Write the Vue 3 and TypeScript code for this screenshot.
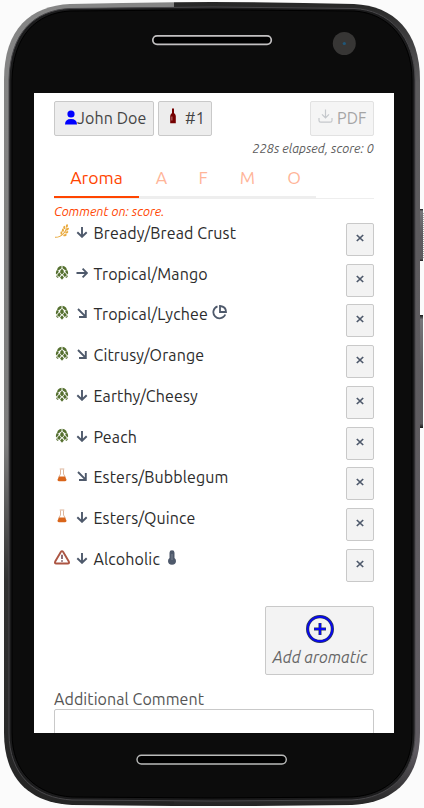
<script setup lang="ts">
type Kind = 'grain' | 'hop' | 'flask' | 'warning'
type Dir = 'down' | 'right' | 'diagonal'
interface Aromatic {
  kind: Kind
  dir: Dir
  name: string
  extra?: 'pie' | 'thermo'
}

const rows: Aromatic[] = [
  { kind: 'grain', dir: 'down', name: 'Bready/Bread Crust' },
  { kind: 'hop', dir: 'right', name: 'Tropical/Mango' },
  { kind: 'hop', dir: 'diagonal', name: 'Tropical/Lychee', extra: 'pie' },
  { kind: 'hop', dir: 'diagonal', name: 'Citrusy/Orange' },
  { kind: 'hop', dir: 'down', name: 'Earthy/Cheesy' },
  { kind: 'hop', dir: 'down', name: 'Peach' },
  { kind: 'flask', dir: 'diagonal', name: 'Esters/Bubblegum' },
  { kind: 'flask', dir: 'down', name: 'Esters/Quince' },
  { kind: 'warning', dir: 'down', name: 'Alcoholic', extra: 'thermo' },
]

const arrows: Record<Dir, string> = {
  down: 'M6 1v9.5M1.3 6.2L6 10.8l4.7-4.6',
  right: 'M0.5 6h10.3M6.6 1.6L11 6l-4.4 4.4',
  diagonal: 'M2 2l7.6 7.6M9.8 3v7H3',
}
const tabs = ['A', 'F', 'M', 'O']
</script>

<template>
  <div class="phone">
    <svg class="shell" width="424" height="808" viewBox="0 0 424 808">
      <defs>
        <linearGradient id="rimL" x1="0" y1="0" x2="0" y2="1">
          <stop offset="0" stop-color="#858585" />
          <stop offset=".55" stop-color="#7d7d7d" />
          <stop offset=".72" stop-color="#303030" />
          <stop offset="1" stop-color="#242424" />
        </linearGradient>
        <linearGradient id="rimR" x1="0" y1="0" x2="0" y2="1">
          <stop offset="0" stop-color="#262626" />
          <stop offset=".1" stop-color="#5c5b5d" />
          <stop offset=".93" stop-color="#605c62" />
          <stop offset="1" stop-color="#242424" />
        </linearGradient>
        <linearGradient id="key" x1="0" y1="0" x2="0" y2="1">
          <stop offset="0" stop-color="#171717" />
          <stop offset=".04" stop-color="#77767a" />
          <stop offset=".5" stop-color="#5c5a5e" />
          <stop offset=".96" stop-color="#5c5a5e" />
          <stop offset="1" stop-color="#171717" />
        </linearGradient>
        <clipPath id="lh"><rect width="174" height="808" /></clipPath>
        <clipPath id="rh"><rect x="174" width="250" height="808" /></clipPath>
        <path id="outer" d="M4 80C4 28 31 6 70 4Q212 0 354 4C394 6 420 31 420 80V733C420 779 394 803 352 805Q212 807 72 805C30 803 4 779 4 733Z" />
      </defs>
      <rect x="418" y="209" width="5" height="52" fill="url(#key)" />
      <path d="M423.500 213v46" stroke="#a9a9a9" stroke-dasharray="1 1" />
      <rect x="418" y="315" width="5" height="113" fill="url(#key)" />
      <use href="#outer" fill="url(#rimL)" clip-path="url(#lh)" />
      <use href="#outer" fill="url(#rimR)" clip-path="url(#rh)" />
      <path d="M9 80C10 33 34 10 70 8.500Q212 5.500 354 8.500C389 10 415 36 415 80V733C415 775 389 798 352 800Q212 802 72 800C35 798 9 775 9 733Z" fill="#1b1b1c" stroke="#48474a" />
      <path d="M12 80C13 36 36 13 70 11Q212 8.500 354 11C387 13 412 38 412 80V733C412 773 387 795 352 797Q212 799 72 797C37 795 12 773 12 733Z" fill="#0c0c0c" stroke="#000" />
      <rect x="152.800" y="35.800" width="118.500" height="8.500" rx="4.250" fill="#000" stroke="#c2c0c1" stroke-width="1.700" />
      <circle cx="344.300" cy="43.500" r="11.500" fill="#373635" />
      <circle cx="344.300" cy="43.500" r="1.600" fill="#205779" />
      <rect x="137" y="755.200" width="149.300" height="8.800" rx="4.400" fill="#000" stroke="#b9bab9" stroke-width="1.400" />
    </svg>

    <main class="screen">
      <header class="toolbar">
        <button class="btn user">
          <svg width="12" height="15" viewBox="0 0 12 15"><circle cx="6" cy="4" r="3.600" fill="#00f" /><path d="M0 14.500Q0 9 6 9t6 5.500Z" fill="#00f" /></svg>
          <span>John Doe</span>
        </button>
        <button class="btn beer">
          <svg width="6" height="16" viewBox="0 0 6 16"><path d="M2 .5h2V5q1.800 1.500 1.800 3v7.200H.2V8Q.2 6.500 2 5Z" fill="#750000" /><path d="M1 8.500h1.600v4H1z" fill="#a45050" /></svg>
          <span>#1</span>
        </button>
        <button class="btn pdf" disabled>
          <svg width="15" height="15" viewBox="0 0 15 15" fill="none" stroke="#c5c8cc" stroke-width="1.200"><path d="M7.500 .5v8M4 5.300l3.500 3.500L11 5.300M1 9v2.500q0 1.700 1.700 1.700h9.600q1.700 0 1.700-1.700V9" /></svg>
          <span>PDF</span>
        </button>
      </header>
      <p class="status"><span>228s elapsed, score: 0</span></p>
      <nav class="tabs">
        <div class="tab active">Aroma</div>
        <div class="rest"><div v-for="t in tabs" :key="t" class="tab" :class="'t' + t">{{ t }}</div></div>
      </nav>
      <p class="hint"><span>Comment on: score.</span></p>

      <ul class="list">
        <li v-for="r in rows" :key="r.name">
          <svg class="kind" width="16" height="16" viewBox="0 0 16 16">
            <g v-if="r.kind === 'grain'" fill="#e9a93c">
              <path d="M1 13.300Q6 13.500 9.500 9.500T12 4" fill="none" stroke="#e9a93c" stroke-width="1.100" />
              <ellipse cx="7.400" cy="9" rx="1" ry="1.700" />
              <ellipse cx="8.900" cy="6.300" rx="1" ry="1.700" />
              <ellipse cx="10.300" cy="3.500" rx="1" ry="1.700" />
              <ellipse cx="12.900" cy="2" rx="1" ry="1.700" transform="rotate(15 12.900 2)" />
              <ellipse cx="13.500" cy="5.200" rx="1" ry="1.700" transform="rotate(50 13.500 5.200)" />
              <ellipse cx="12.800" cy="8.300" rx="1" ry="1.700" transform="rotate(60 12.800 8.300)" />
              <ellipse cx="11" cy="11.200" rx="1" ry="1.800" transform="rotate(75 11 11.200)" />
            </g>
            <g v-else-if="r.kind === 'hop'" fill="#55702f">
              <path d="M7.500 .8V3.200L3.300 6.200Q2.300 2 7.500 .8ZM8.500 .8V3.200l4.200 3Q13.700 2 8.500 .8Z" />
              <path d="M8 3.800Q10.300 5.500 9.900 7.500L8 9.600 6.100 7.500Q5.700 5.500 8 3.800Z" />
              <path d="M2.400 5.200L1.800 8.300 2.600 9.600 5 6.400ZM13.600 5.200l.6 3.100-.8 1.300L11 6.400Z" />
              <path d="M5.300 7.200L7 9.800 5.300 12 3 10.300ZM10.700 7.200L9 9.800l1.700 2.200L13 10.300Z" />
              <path d="M2 10.200l2.500 2-.6.900Q2 12.300 2 10.200ZM14 10.200l-2.500 2 .6.900Q14 12.300 14 10.200Z" />
              <path d="M8 10.300l1.900 2.200L8 14.700l-1.900-2.200Z" />
            </g>
            <g v-else-if="r.kind === 'flask'">
              <path d="M5.700 1h4.600M6.500 1.500V6L4.500 9.500M9.500 1.500V6l2 3.500" fill="none" stroke="#d9ad90" stroke-width=".9" />
              <path d="M5 8.500h6l1.400 3q.4 1.800-1.300 1.800H4.900q-1.700 0-1.300-1.800Z" fill="#d9651a" />
            </g>
            <g v-else fill="none" stroke="#ac5543" stroke-width="1.900">
              <path d="M6.800 2Q8 .2 9.200 2l5.600 9.500q.8 2-1 2H2.200q-1.800 0-1-2Z" stroke-linejoin="round" />
              <path d="M8 4.800v4.200M8 10.200v1.600" stroke="#7a5560" stroke-width="1.700" />
            </g>
          </svg>
          <svg class="dir" width="12" height="12" viewBox="0 0 12 12"><path :d="arrows[r.dir]" fill="none" stroke="#4e596b" stroke-width="1.900" /></svg>
          <span class="name">{{ r.name }}</span>
          <svg v-if="r.extra === 'pie'" class="pie" width="15" height="15" viewBox="0 0 15 15" fill="none" stroke="#4e596b" stroke-width="1.800"><path d="M5.500 1.300a6.200 6.200 0 1 0 7.800 8.200" /><path d="M8 1v6h6Q14 1.500 8 1Z" /></svg>
          <svg v-if="r.extra === 'thermo'" class="thermo" width="8" height="15" viewBox="0 0 8 15"><path d="M1.500 2.700Q1.500.3 4 .3t2.500 2.400V8Q8 9.200 8 11q0 3.700-4 3.700T0 11q0-1.800 1.500-3Z" fill="#4e596b" /><path d="M4 4v6" stroke="#7b8492" /></svg>
          <button class="btn remove" aria-label="Remove"><svg width="8" height="8" viewBox="0 0 8 8"><path d="M.8 1l6.400 6M7.200 1L.8 7" stroke="#4e596b" stroke-width="1.700" /></svg></button>
        </li>
      </ul>

      <button class="btn add">
        <svg width="28" height="28" viewBox="0 0 28 28" fill="none">
          <circle cx="14" cy="14" r="12.400" stroke="#2e3b59" stroke-width="3.200" /><circle cx="14" cy="14" r="12.300" stroke="#0808ee" stroke-width="1.900" />
          <path d="M14 8v12M8 14h12" stroke="#2e3b59" stroke-width="3" /><path d="M14 8.500v11M8.500 14h11" stroke="#0808ee" stroke-width="2" />
        </svg>
        <span>Add aromatic</span>
      </button>
      <label class="label"><span>Additional Comment</span></label>
      <div class="comment"></div>
    </main>
  </div>
</template>

<style>
body { background: #fbfbfb; overflow: hidden; }
</style>

<style scoped>
* { box-sizing: border-box; }
.phone { position: relative; width: 424px; height: 808px; padding: 93px 30px 75px 34px; font: 16px/20px Ubuntu, "Noto Sans", sans-serif; color: #2b2b2b; }
.shell { position: absolute; inset: 0; }
svg { display: block; flex: none; }
.screen { position: relative; width: 360px; height: 640px; overflow: hidden; background: #fff; padding: 8px 20px 0; display: flex; flex-direction: column; }
.screen > * { flex: none; }
.btn { font: inherit; color: #444; background: #ededed; border: 1px solid #c9c9c9; border-radius: 2px; padding: 0; margin: 0; display: flex; white-space: nowrap; }
.toolbar { display: flex; gap: 4px; height: 35px; }
.toolbar .btn { height: 35px; padding-top: 7px; line-height: 19px; letter-spacing: .1px; }
.toolbar .user { width: 100px; padding-left: 10px; }
.user svg { margin-top: 1px; }
.toolbar .beer { width: 54px; padding-left: 11px; gap: 9px; }
.beer svg { margin-top: -1px; }
.toolbar .pdf { width: 64px; margin-left: auto; padding-left: 7px; gap: 4px; background: #f5f5f5; border-color: #e2e2e2; color: #a5a5a5; }
p { margin: 0; white-space: nowrap; font-style: italic; }
.status { height: 26px; padding-top: 2px; font-size: 12.8px; line-height: 21px; text-align: right; color: #5c5c5c; }
.tabs { display: flex; height: 37px; border-bottom: 1px solid #eee; font-size: 17.6px; line-height: 31px; color: #ffb599; }
.tab.active { width: 85px; height: 36px; border-bottom: 2px solid #ff4500; color: #ff4500; text-align: center; }
.rest { display: flex; width: 177px; height: 36px; border-bottom: 2px solid #eee; }
.rest .tab { padding-left: 1px; }
.tA { width: 44px; text-align: center; }
.tF { width: 40px; text-align: center; }
.tM { width: 49px; text-align: center; }
.tO { width: 45px; text-align: center; }
.hint { height: 24px; font-size: 12.8px; line-height: 24px; color: #ff4500; }
.list { list-style: none; margin: 0; padding: 0; }
li { display: flex; height: 40.73px; }
.kind { margin-top: 1px; margin-right: 6px; }
.dir { margin-top: 3px; margin-right: 5.5px; }
.name { white-space: nowrap; line-height: 21px; letter-spacing: .12px; }
.pie { margin: 1px 0 0 4px; }
.thermo { margin: 1px 0 0 8px; }
.remove { width: 28px; height: 33px; margin-left: auto; background: #f3f3f3; padding: 10px 0 0 9px; }
.add { width: 109px; height: 69px; margin-top: 16.4px; align-self: flex-end; flex-direction: column; align-items: center; background: #f3f3f3; padding-top: 8px; color: #666; font-style: italic; }
.add span { margin-top: 4px; padding-left: 1px; }
.label { height: 34px; padding-top: 14px; color: #555; white-space: nowrap; letter-spacing: .07px; }
.comment { height: 70px; border: 1px solid #c9c9c9; border-radius: 2px; }
</style>
